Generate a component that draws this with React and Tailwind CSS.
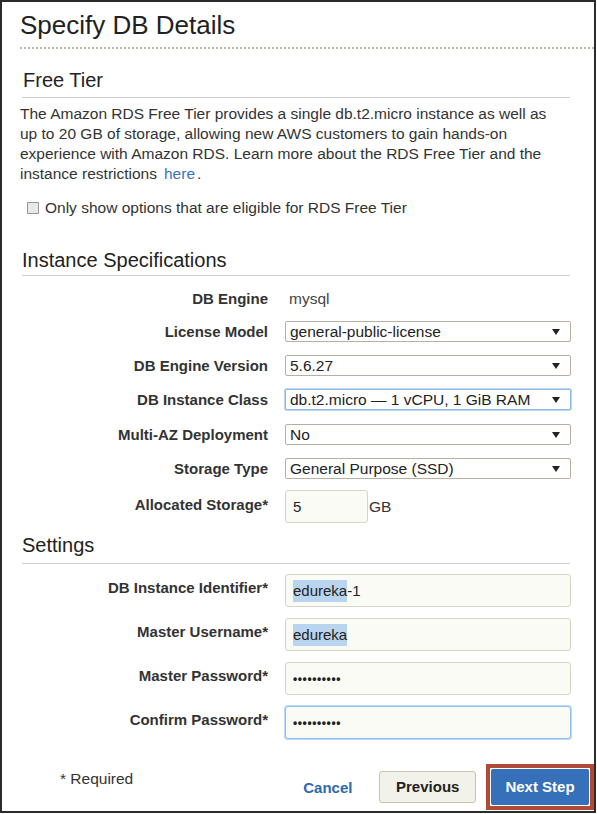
import React from 'react';

const font = { fontFamily: '"Liberation Sans", Arial, sans-serif' };

function Caret() {
  return (
    <svg width="8" height="6" viewBox="0 0 8 6" className="shrink-0">
      <path d="M0 0 H8 L4 6 Z" fill="#222" />
    </svg>
  );
}

function Row({ label, children, className = '', labelClass = '' }) {
  return (
    <div className={`flex ${className}`}>
      <div className={`w-[248px] shrink-0 text-right text-[15px] leading-[18px] font-bold text-[#333] ${labelClass}`}>
        {label}
      </div>
      <div className="ml-[17px] flex items-center">{children}</div>
    </div>
  );
}

function Select({ value, focused }) {
  return (
    <div
      className={`flex h-[21px] w-[286px] items-center justify-between rounded-[2px] border bg-white pl-[4px] pr-[10px] text-[15.5px] text-[#222] ${
        focused ? 'border-[#8fbbe8] shadow-[0_0_0_1px_#b9d6f3]' : 'border-[#b5b0a0]'
      }`}
    >
      <span>{value}</span>
      <Caret />
    </div>
  );
}

function Field({ children, focused, w = 'w-[286px]' }) {
  return (
    <div
      className={`flex h-[33px] ${w} items-center rounded-[3px] border bg-[#fbfbf6] pl-[7px] text-[15px] text-[#222] ${
        focused ? 'border-[#8fc0f0] shadow-[0_0_0_1px_#bcd9f5]' : 'border-[#d6d6c6]'
      }`}
    >
      {children}
    </div>
  );
}

function Sel({ children }) {
  return <span className="bg-[#b9d4ee]">{children}</span>;
}

function Dots() {
  return <span className="text-[12px] font-bold tracking-[0.6px]">••••••••••</span>;
}

export default function App() {
  return (
    <div style={font} className="h-[813px] w-[596px] overflow-hidden border-2 border-[#2b2b2b] bg-white text-[#333]">
      <div className="pl-[18px] pt-[7px]">
        <h1 className="text-[26px] leading-[32px] text-[#222]">Specify DB Details</h1>
        <div className="mt-[6px] border-t-2 border-dotted border-[#bdb6a6]" />

        <div className="pr-[24px]">
          <h2 className="mt-[19px] pl-[3px] text-[20px] leading-[24px] text-[#222]">Free Tier</h2>
          <div className="mt-[5px] ml-[2px] border-t border-[#cfcfcf]" />
          <p className="mt-[6px] pr-[10px] text-[15.5px] leading-[20px] text-[#333]">
            The Amazon RDS Free Tier provides a single db.t2.micro instance as well as up to 20 GB of storage,
            allowing new AWS customers to gain hands-on experience with Amazon RDS. Learn more about the RDS Free
            Tier and the instance restrictions
            <span className="ml-[7px] mr-[2px] inline-block text-[#3b73b9]">here</span>
            <span className="inline-block">.</span>
          </p>
          <div className="mt-[12px] flex items-center pl-[7px] text-[15.5px]">
            <span className="h-[12px] w-[12px] border border-[#999] bg-[#e8e8e8]" />
            <span className="ml-[6px]">Only show options that are eligible for RDS Free Tier</span>
          </div>

          <h2 className="mt-[29px] pl-[2px] text-[20px] leading-[24px] text-[#222]">Instance Specifications</h2>
          <div className="mt-[3px] ml-[2px] border-t border-[#cfcfcf]" />
        </div>

        <div className="mt-[13px] flex flex-col gap-[13px]">
          <Row label="DB Engine" className="items-center">
            <span className="pl-[4px] text-[15.5px] leading-[19px] text-[#444]">mysql</span>
          </Row>
          <Row label="License Model" className="items-center"><Select value="general-public-license" /></Row>
          <Row label="DB Engine Version" className="items-center"><Select value="5.6.27" /></Row>
          <Row label="DB Instance Class" className="items-center"><Select value="db.t2.micro — 1 vCPU, 1 GiB RAM" focused /></Row>
          <Row label="Multi-AZ Deployment" className="items-center mt-[1px]"><Select value="No" /></Row>
          <Row label="Storage Type" className="items-center"><Select value="General Purpose (SSD)" /></Row>
        </div>
        <Row label="Allocated Storage*" className="mt-[11px] items-center" labelClass="-mt-[4px]">
          <Field w="w-[83px]">5</Field>
          <span className="ml-[1px] text-[15.5px]">GB</span>
        </Row>

        <div className="pr-[24px]">
          <h2 className="mt-[10px] pl-[2px] text-[20px] leading-[24px] text-[#222]">Settings</h2>
          <div className="mt-[6px] ml-[2px] border-t border-[#cfcfcf]" />
        </div>

        <div className="mt-[10px] flex flex-col gap-[11px]">
          <Row label="DB Instance Identifier*" labelClass="pt-[5px]">
            <Field><Sel>edureka</Sel>-1</Field>
          </Row>
          <Row label="Master Username*" labelClass="pt-[5px]">
            <Field><Sel>edureka</Sel></Field>
          </Row>
          <Row label="Master Password*" labelClass="pt-[5px]">
            <Field><Dots /></Field>
          </Row>
          <Row label="Confirm Password*" labelClass="pt-[5px]">
            <Field focused><Dots /></Field>
          </Row>
        </div>

        <div className="mt-[24px] flex items-start">
          <span className="ml-[40px] mt-[4px] whitespace-nowrap text-[15.5px] text-[#333]">* Required</span>
          <span className="ml-[170px] mt-[14px] text-[15px] font-bold text-[#2f68ad]">Cancel</span>
          <button className="ml-[27px] mt-[8px] h-[32px] w-[97px] rounded-[3px] border border-[#c8c4b0] bg-[#f3f2ea] text-[15px] font-bold text-[#222]">
            Previous
          </button>
          <div className="ml-[10px] mt-[1px] border-[4px] border-[#b04a36] p-[1px]">
            <button className="h-[36px] w-[98px] rounded-[2px] bg-[#3570b8] text-[15px] font-bold text-white">
              Next Step
            </button>
          </div>
        </div>
      </div>
    </div>
  );
}
